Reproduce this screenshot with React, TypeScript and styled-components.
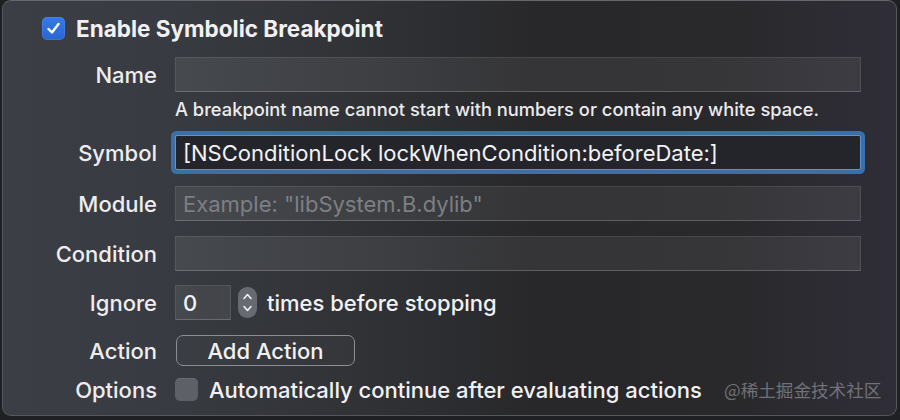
import React from "react";
import styled, { createGlobalStyle } from "styled-components";

const Global = createGlobalStyle`
  html, body { margin: 0; padding: 0; }
  body {
    width: 900px;
    height: 420px;
    overflow: hidden;
    background: #1f2023;
    font-family: Inter, "Noto Sans", "Noto Sans CJK SC", sans-serif;
    -webkit-font-smoothing: antialiased;
  }
`;

const Panel = styled.div`
  position: relative;
  box-sizing: border-box;
  margin: 0 3px 0 2px;
  height: 416px;
  border-radius: 9px;
  border: 1px solid #55575d;
  border-top-color: #66676d;
  background: linear-gradient(
    to right,
    #3b3e45 0%,
    #383b41 18%,
    #303236 40%,
    #28282a 60%,
    #29292c 82%,
    #2f2e38 100%
  );
  padding: 11px 35px 0 39px;
  display: flex;
  flex-direction: column;
  color: #f1f1f3;
`;

const TitleRow = styled.label`
  display: flex;
  align-items: center;
  gap: 11px;
  height: 32px;
  font-size: 22.5px;
  font-weight: 700;
`;

const Box = styled.span<{ $checked?: boolean }>`
  box-sizing: border-box;
  width: 23px;
  height: 23px;
  border-radius: 5px;
  display: inline-flex;
  align-items: center;
  justify-content: center;
  flex: none;
  background: ${(p) =>
    p.$checked ? "linear-gradient(#3579e8, #2a66d2)" : "#5d6067"};
  box-shadow: ${(p) =>
    p.$checked ? "inset 0 0 0 1px rgba(255,255,255,0.08)" : "inset 0 1px 0 rgba(255,255,255,0.08)"};
`;

const Row = styled.div<{ $h?: number; $mt: number }>`
  display: grid;
  grid-template-columns: 115px 1fr;
  column-gap: 18px;
  align-items: center;
  height: ${(p) => p.$h ?? 35}px;
  margin-top: ${(p) => p.$mt}px;
`;

const Label = styled.span`
  text-align: right;
  font-size: 22px;
  font-weight: 500;
  color: #ededef;
  white-space: nowrap;
  justify-self: end;
`;

const Field = styled.div<{ $focused?: boolean; $placeholder?: boolean; $w?: number }>`
  box-sizing: border-box;
  height: 35px;
  width: ${(p) => (p.$w ? `${p.$w}px` : "100%")};
  display: flex;
  align-items: center;
  padding: 0 7px;
  font-size: 22px;
  color: ${(p) => (p.$placeholder ? "#7d7f84" : "#f3f3f5")};
  background: ${(p) =>
    p.$focused
      ? "#23252a"
      : "linear-gradient(to right, rgba(255,255,255,0.075), rgba(255,255,255,0.06) 60%, rgba(255,255,255,0.07))"};
  border: 1px solid ${(p) => (p.$focused ? "#5b93d3" : "rgba(255,255,255,0.09)")};
  border-bottom-color: ${(p) => (p.$focused ? "#5b93d3" : "rgba(255,255,255,0.2)")};
  box-shadow: ${(p) => (p.$focused ? "0 0 0 4px #3b6fa9" : "none")};
  border-radius: ${(p) => (p.$focused ? "2px" : "0")};
  white-space: nowrap;
  overflow: hidden;
`;

const Hint = styled.div`
  margin-top: 6px;
  height: 22px;
  padding-left: 133px;
  font-size: 18.3px;
  font-weight: 500;
  color: #ececee;
  line-height: 22px;
  white-space: nowrap;
`;

const Inline = styled.div<{ $gap: number }>`
  display: flex;
  align-items: center;
  gap: ${(p) => p.$gap}px;
  font-size: 22px;
  font-weight: 500;
  white-space: nowrap;
`;

const Stepper = styled.span`
  width: 19px;
  height: 31px;
  border-radius: 9px;
  background: #676a71;
  display: inline-flex;
  align-items: center;
  justify-content: center;
  margin-left: 7px;
  margin-right: 3px;
`;

const Button = styled.button`
  box-sizing: border-box;
  width: 179px;
  height: 31px;
  border-radius: 7px;
  border: 1.5px solid #8b8d92;
  background: rgba(255, 255, 255, 0.02);
  color: #f1f1f3;
  font-family: inherit;
  font-size: 22px;
  font-weight: 500;
  padding: 0;
  margin-left: 1px;
`;

const Watermark = styled.span`
  position: absolute;
  left: 721px;
  top: 376px;
  font-size: 17.6px;
  color: rgba(230, 230, 235, 0.38);
  font-family: "Noto Sans CJK SC", "Noto Sans", sans-serif;
`;

export default function App() {
  return (
    <>
      <Global />
      <Panel>
        <TitleRow>
          <Box $checked>
            <svg width="17" height="17" viewBox="0 0 17 17">
              <path
                d="M3.5 9 L7 12.5 L13.5 4"
                fill="none"
                stroke="#fff"
                strokeWidth="2.4"
                strokeLinecap="round"
                strokeLinejoin="round"
              />
            </svg>
          </Box>
          Enable Symbolic Breakpoint
        </TitleRow>

        <Row $mt={13}>
          <Label>Name</Label>
          <Field />
        </Row>
        <Hint>A breakpoint name cannot start with numbers or contain any white space.</Hint>

        <Row $mt={15}>
          <Label>Symbol</Label>
          <Field $focused>[NSConditionLock lockWhenCondition:beforeDate:]</Field>
        </Row>

        <Row $mt={16} $h={34}>
          <Label>Module</Label>
          <Field $placeholder>Example: "libSystem.B.dylib"</Field>
        </Row>

        <Row $mt={16} $h={34}>
          <Label>Condition</Label>
          <Field />
        </Row>

        <Row $mt={15}>
          <Label>Ignore</Label>
          <Inline $gap={0}>
            <Field $w={56}>0</Field>
            <Stepper>
              <svg width="11" height="25" viewBox="0 0 11 25">
                <path d="M2 8.5 L5.5 4.5 L9 8.5" fill="none" stroke="#f2f2f4" strokeWidth="1.6" strokeLinecap="round" strokeLinejoin="round" />
                <path d="M2 16.5 L5.5 20.5 L9 16.5" fill="none" stroke="#f2f2f4" strokeWidth="1.6" strokeLinecap="round" strokeLinejoin="round" />
              </svg>
            </Stepper>
            <span style={{ marginLeft: 7 }}>times before stopping</span>
          </Inline>
        </Row>

        <Row $mt={15} $h={30}>
          <Label>Action</Label>
          <Inline $gap={0}>
            <Button>Add Action</Button>
          </Inline>
        </Row>

        <Row $mt={8} $h={33}>
          <Label>Options</Label>
          <Inline $gap={11}>
            <Box />
            Automatically continue after evaluating actions
          </Inline>
        </Row>

        <Watermark>@稀土掘金技术社区</Watermark>
      </Panel>
    </>
  );
}
